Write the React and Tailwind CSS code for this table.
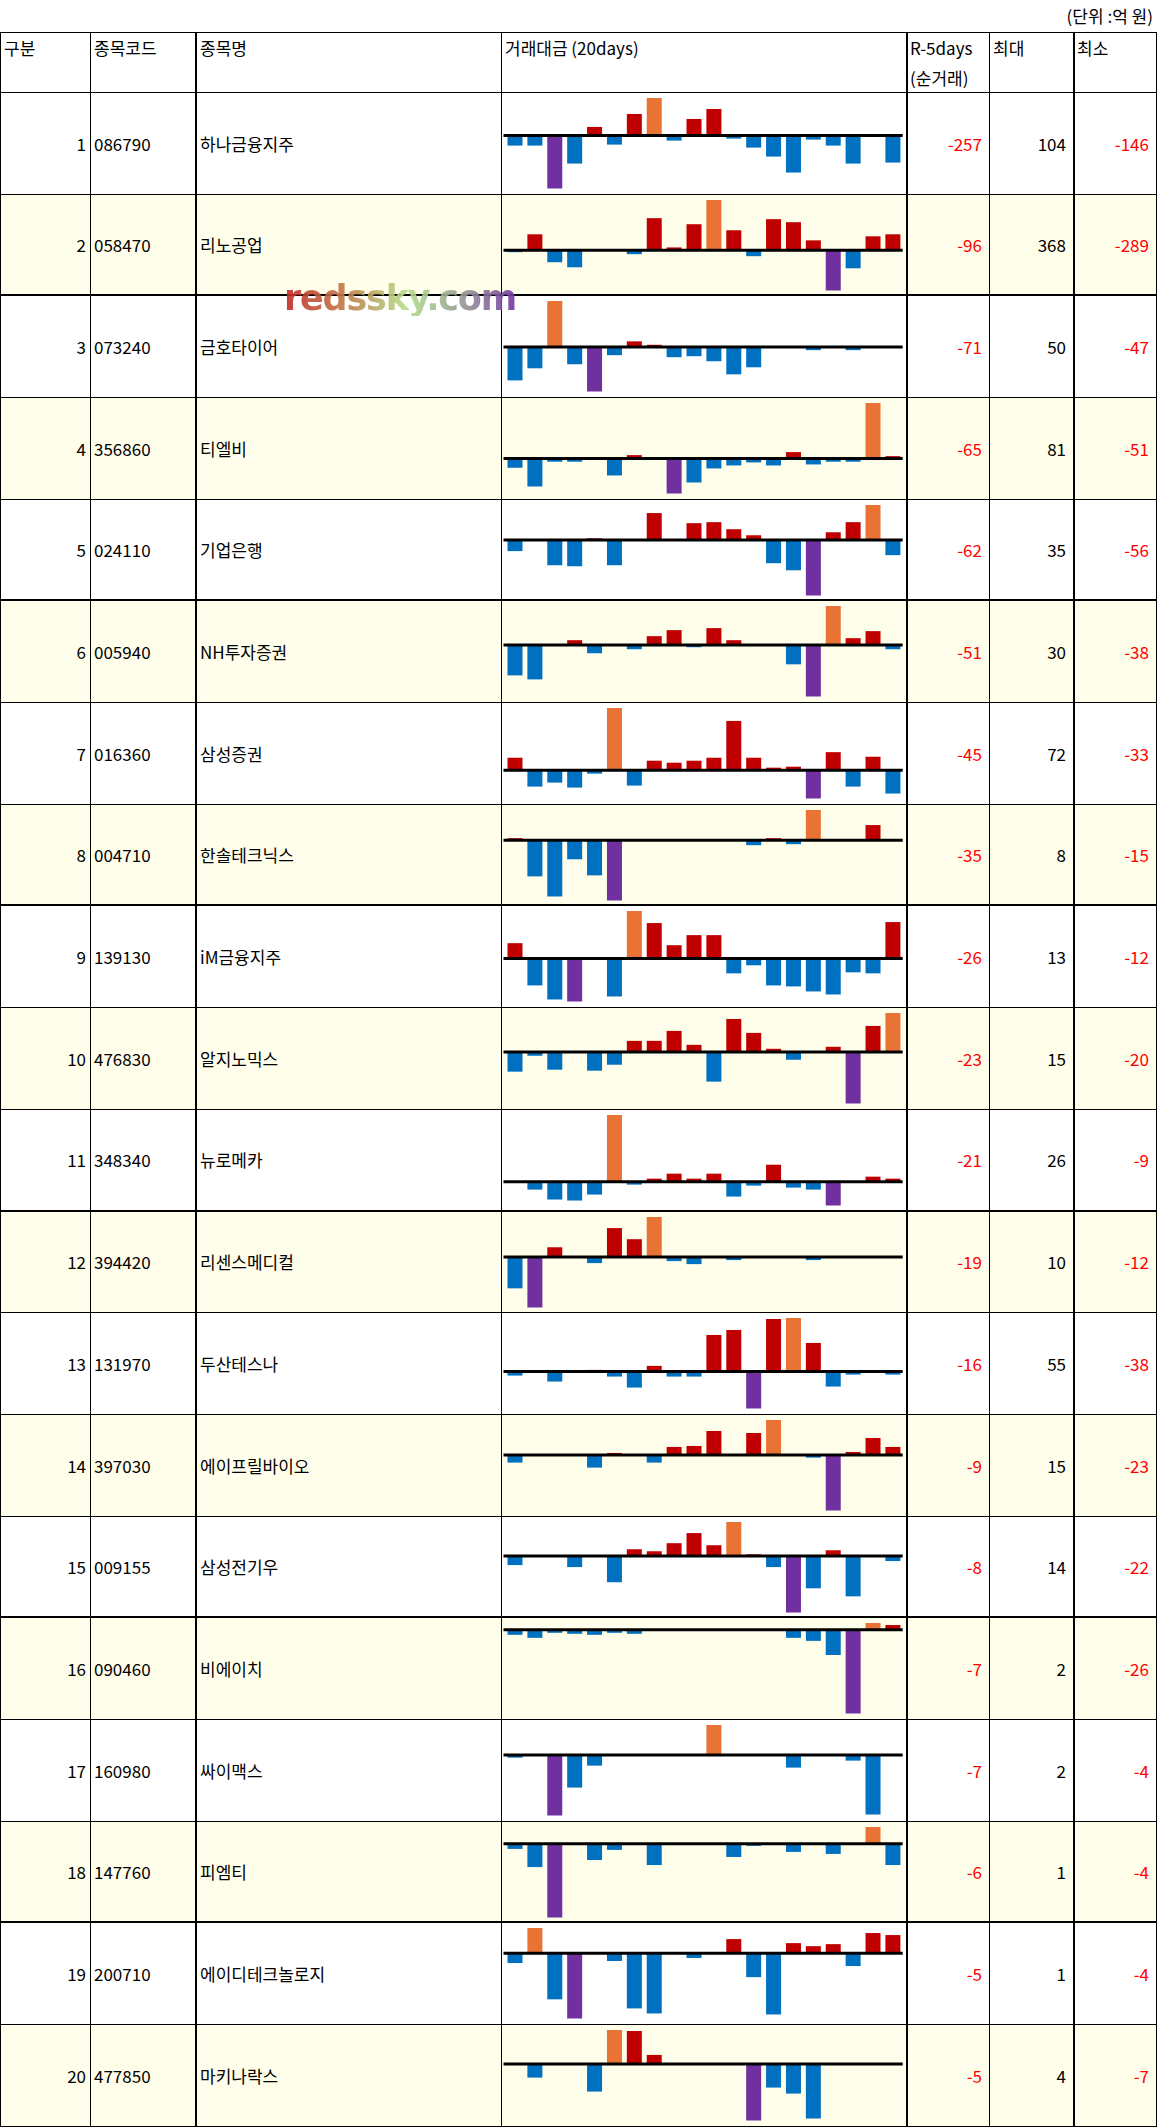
import React from 'react';

// bar heights measured in px (positive = up). colours come from max / min.
const rows = [
    { no: 1, code: '086790', name: '하나금융지주', r5: -257, hi: 104, lo: -146, thick: false,
        bars: [-10, -10, -53, -28, 8.7, -9, 21.7, 37.7, -5, 16.7, 26.7, -3, -12, -21, -37, -4, -10, -28, 0, -27] },
    { no: 2, code: '058470', name: '리노공업', r5: -96, hi: 368, lo: -289, thick: true,
        bars: [-2, 15.7, -12, -17, 0, 0, -4, 31.7, 2.7, 25.7, 49.7, 19.7, -6, 30.7, 27.7, 9.7, -40, -18, 13.7, 15.7] },
    { no: 3, code: '073240', name: '금호타이어', r5: -71, hi: 50, lo: -47, thick: false,
        bars: [-33, -21, 45.7, -17, -44, -8, 5.7, 2.3, -10, -9, -14, -27, -20, 0, 0, -3, 0, -3, 0, 0] },
    { no: 4, code: '356860', name: '티엘비', r5: -65, hi: 81, lo: -51, thick: false,
        bars: [-9.3, -28, -3.3, -3.3, 0, -17, 3.3, 0, -35, -24, -10, -7, -4, -7, 6.3, -6, -3.3, -3.3, 55.3, 2.3] },
    { no: 5, code: '024110', name: '기업은행', r5: -62, hi: 35, lo: -56, thick: true,
        bars: [-11, 0, -25, -26, 1.7, -25, 0, 26.7, 0, 16.7, 17.7, 10.7, 4.7, -23, -30, -55, 7.7, 17.7, 34.7, -15] },
    { no: 6, code: '005940', name: 'NH투자증권', r5: -51, hi: 30, lo: -38, thick: false,
        bars: [-30.3, -34.3, 0, 4.7, -8.3, 0, -4.3, 8.7, 14.7, -2.3, 16.7, 4.7, 0, 0, -19.3, -51.3, 38.7, 6.7, 13.7, -4.3] },
    { no: 7, code: '016360', name: '삼성증권', r5: -45, hi: 72, lo: -33, thick: false,
        bars: [12.7, -16.3, -12.3, -17.3, -3.3, 62.7, -15.3, 9.7, 7.7, 9.7, 12.7, 49.7, 12.7, 2.7, 3.7, -28.3, 18.3, -16.3, 13.7, -23.3] },
    { no: 8, code: '004710', name: '한솔테크닉스', r5: -35, hi: 8, lo: -15, thick: true,
        bars: [2, -36, -56, -19, -35, -60, 0, 0, 0, 0, 0, 0, -5, 2, -4, 30, 0, 0, 15, 0] },
    { no: 9, code: '139130', name: 'iM금융지주', r5: -26, hi: 13, lo: -12, thick: false,
        bars: [15.3, -26.7, -40.7, -42.7, 0, -37.7, 47.3, 35.3, 13.3, 23.3, 23.3, -14.7, -6.7, -26.7, -27.7, -32.7, -35.7, -13.7, -14.7, 36.3] },
    { no: 10, code: '476830', name: '알지노믹스', r5: -23, hi: 15, lo: -20, thick: false,
        bars: [-19.7, -3.7, -17.7, 0, -18.7, -12.7, 11.3, 11.3, 21.3, 7.3, -29.7, 33.3, 19.3, 3.3, -7.7, 0, 5.3, -51.7, 26.3, 39.3] },
    { no: 11, code: '348340', name: '뉴로메카', r5: -21, hi: 26, lo: -9, thick: true,
        bars: [0, -8, -18, -19, -13, 67, -3, 3, 8, 3, 8, -15, -4, 17, -6, -8, -24, 0, 5, 3] },
    { no: 12, code: '394420', name: '리센스메디컬', r5: -19, hi: 10, lo: -12, thick: false,
        bars: [-31, -50, 9.7, 0, -6, 28.7, 17.7, 39.7, -4, -7, 0, -3, 0, 0, 0, -3, 0, 0, 0, 0] },
    { no: 13, code: '131970', name: '두산테스나', r5: -16, hi: 55, lo: -38, thick: false,
        bars: [-4, 0, -10, 0, 1.7, -5, -16, 5.7, -5, -5, 36.7, 41.7, -37, 52.7, 53.7, 28.7, -15, -3, 0, -3] },
    { no: 14, code: '397030', name: '에이프릴바이오', r5: -9, hi: 15, lo: -23, thick: false,
        bars: [-7.7, 0, 0, 0, -12.7, 2, 0, -7.7, 8, 9, 24, 0, 22, 35, 0, -2.7, -55.7, 3, 17, 8] },
    { no: 15, code: '009155', name: '삼성전기우', r5: -8, hi: 14, lo: -22, thick: true,
        bars: [-9, 0, 0, -11, 0, -26, 6.7, 4.7, 12.7, 22.7, 10.7, 33.7, 1.7, -11, -56, -32, 5.7, -40, 0, -5] },
    { no: 16, code: '090460', name: '비에이치', r5: -7, hi: 2, lo: -26, thick: false,
        bars: [-5, -8, -3, -4, -5, -3, -4, 0, 0, 0, 0, 0, 0, 0, -8, -11, -25, -83, 6.7, 4.7] },
    { no: 17, code: '160980', name: '싸이맥스', r5: -7, hi: 2, lo: -4, thick: false,
        bars: [-2.7, 0, -60.7, -32.7, -10.7, 0, 0, 0, 0, 0, 30, 0, 0, 0, -12.7, 0, 0, -5.7, -59.7, 0] },
    { no: 18, code: '147760', name: '피엠티', r5: -6, hi: 1, lo: -4, thick: true,
        bars: [-5, -23, -73, 0, -16, -6, 0, -21, 0, 0, 0, -13, -2, 0, -8, 0, -10, 0, 16.7, -21] },
    { no: 19, code: '200710', name: '에이디테크놀로지', r5: -5, hi: 1, lo: -4, thick: false,
        bars: [-9.7, 25, -45.7, -64.7, 0, -7.7, -54.7, -59.7, 0, -4.7, 0, 14, -23.7, -60.7, 10, 7, 9, -12.7, 20, 18] },
    { no: 20, code: '477850', name: '마키나락스', r5: -5, hi: 4, lo: -7, thick: false,
        bars: [0, -13.7, 0, 0, -27.7, 34, 33, 9, 0, 0, 0, 0, -56.7, -23.7, -29.7, -54.7, 0, 0, 0, 0] },
];

const MiniChart = ({ bars, h }) => {
    const maxV = Math.max(0, ...bars);
    const minV = Math.min(0, ...bars);
    const s = 90.5 / (maxV - minV);
    const base = 5 + maxV * s;

    return (
        <svg width="404" height={h} className="block">
            {bars.map((v, i) => {
                if (v === 0) return null;
                let fill = v > 0 ? '#c00000' : '#0070c0';
                if (v === maxV) fill = '#e97334';
                if (v === minV) fill = '#7030a0';
                const bh = Math.abs(v) * s;
                return (
                    <rect key={i} x={5.5 + i * 19.89} y={v > 0 ? base - bh : base} width="15" height={bh} fill={fill} />
                );
            })}
            <line x1="1.5" x2="400.7" y1={base} y2={base} stroke="#000" strokeWidth="3" />
        </svg>
    );
};

const Row = ({ r }) => {
    const bg = r.no % 2 === 0 ? 'bg-[#fffeeb]' : 'bg-white';
    const bb = r.thick ? 'border-b-2' : 'border-b';
    return (
        <div className={`flex h-[101.7px] ${bb} border-black ${bg}`}>
            <div className="w-[90px] shrink-0 border-r border-black flex items-center justify-end pr-[4px]">{r.no}</div>
            <div className="w-[106px] shrink-0 border-r-2 border-black flex items-center pl-[3px]">{r.code}</div>
            <div className="w-[305px] shrink-0 border-r border-black flex items-center pl-[3px]">{r.name}</div>
            <div className="w-[406px] shrink-0 border-r-2 border-black overflow-hidden">
                <MiniChart bars={r.bars} h={r.thick ? 99.7 : 100.7} />
            </div>
            <div className="w-[82px] shrink-0 border-r border-black flex items-center justify-end pr-[7px] text-[#ff0000]">{r.r5}</div>
            <div className="w-[85px] shrink-0 border-r-2 border-black flex items-center justify-end pr-[7px]">{r.hi}</div>
            <div className="w-[82px] shrink-0 border-r border-black flex items-center justify-end pr-[7px] text-[#ff0000]">{r.lo}</div>
        </div>
    );
};

const App = () => {
    return (
        <div className="relative w-[1158px] min-h-[2128px] bg-white text-black text-[17px] font-['Noto_Sans_CJK_KR','Noto_Sans',sans-serif]">
            <div className="h-[31.7px] w-[1157px] text-right pr-[4px] leading-[31px]">(단위 :억 원)</div>

            <div className="w-[1157px] border-l border-black">
                <div className="flex h-[61.3px] border-t border-b border-black leading-[30px]">
                    <div className="w-[90px] shrink-0 border-r border-black pl-[3px]">구분</div>
                    <div className="w-[106px] shrink-0 border-r-2 border-black pl-[3px]">종목코드</div>
                    <div className="w-[305px] shrink-0 border-r border-black pl-[3px]">종목명</div>
                    <div className="w-[406px] shrink-0 border-r-2 border-black pl-[3px]">거래대금 (20days)</div>
                    <div className="w-[82px] shrink-0 border-r border-black pl-[2px]">
                        <div>R-5days</div>
                        <div>(순거래)</div>
                    </div>
                    <div className="w-[85px] shrink-0 border-r-2 border-black pl-[3px]">최대</div>
                    <div className="w-[82px] shrink-0 border-r border-black pl-[2px]">최소</div>
                </div>

                {rows.map(r => (
                    <Row key={r.no} r={r} />
                ))}
            </div>

            {/* watermark */}
            <div className="absolute left-[284px] top-[281px] text-[35px] leading-none font-bold tracking-[-1.2px] font-['DejaVu_Sans',sans-serif] bg-[linear-gradient(90deg,#c4282a_0%,#c0804a_28%,#b6dc8a_52%,#a8c890_62%,#959595_78%,#7434a4_100%)] bg-clip-text text-transparent opacity-90">
                redssky.com
            </div>
        </div>
    );
};

export default App;
